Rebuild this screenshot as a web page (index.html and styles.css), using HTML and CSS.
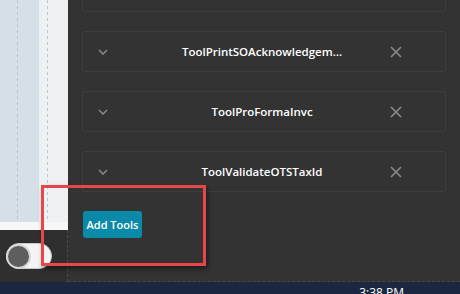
FILE: index.html
```html
<!DOCTYPE html>
<html>
<head>
<meta charset="utf-8">
<link rel="stylesheet" href="styles.css">
</head>
<body>
<div class="screen">
  <div class="main">
    <aside class="side">
      <div class="canvas">
        <div class="col col-a"></div>
        <div class="col col-b"></div>
      </div>
      <div class="strip"></div>
      <div class="side-foot">
        <span class="toggle"><span class="knob"></span></span>
      </div>
    </aside>
    <section class="panel">
      <div class="cards">
        <div class="card card-first"></div>
        <div class="card">
          <svg class="chev" width="10" height="6" viewBox="0 0 10 6"><path d="M1 1 L5 5 L9 1" fill="none" stroke="#8c8c8c" stroke-width="1.5"/></svg>
          <span class="name">ToolPrintSOAcknowledgem…</span>
          <svg class="close" width="12" height="12" viewBox="0 0 12 12"><path d="M1 1 L11 11 M11 1 L1 11" stroke="#8c8c8c" stroke-width="1.6"/></svg>
        </div>
        <div class="card">
          <svg class="chev" width="10" height="6" viewBox="0 0 10 6"><path d="M1 1 L5 5 L9 1" fill="none" stroke="#8c8c8c" stroke-width="1.5"/></svg>
          <span class="name">ToolProFormaInvc</span>
          <svg class="close" width="12" height="12" viewBox="0 0 12 12"><path d="M1 1 L11 11 M11 1 L1 11" stroke="#8c8c8c" stroke-width="1.6"/></svg>
        </div>
        <div class="card">
          <svg class="chev" width="10" height="6" viewBox="0 0 10 6"><path d="M1 1 L5 5 L9 1" fill="none" stroke="#8c8c8c" stroke-width="1.5"/></svg>
          <span class="name">ToolValidateOTSTaxId</span>
          <svg class="close" width="12" height="12" viewBox="0 0 12 12"><path d="M1 1 L11 11 M11 1 L1 11" stroke="#8c8c8c" stroke-width="1.6"/></svg>
        </div>
      </div>
      <button class="add-btn">Add Tools</button>
    </section>
  </div>
  <footer class="taskbar"><span class="clock">3:38 PM</span></footer>
  <div class="highlight"></div>
</div>
</body>
</html>
```

FILE: styles.css
```css
* { box-sizing: border-box; }
html, body { margin: 0; padding: 0; }
body {
  width: 460px;
  height: 294px;
  overflow: hidden;
  background: #333333;
  font-family: "Open Sans", "Noto Sans", sans-serif;
}
.screen {
  position: relative;
  width: 460px;
  height: 294px;
  display: flex;
  flex-direction: column;
}
.main {
  height: 282px;
  display: flex;
}
.side {
  width: 68px;
  display: flex;
  flex-direction: column;
}
.canvas {
  height: 222px;
  display: flex;
}
.col-a {
  width: 39px;
  background: #d4e0e5;
  border-left: 17px solid #d4e0e5;
  background-image: linear-gradient(#b9c3c7 50%, transparent 50%);
  background-size: 1px 6px;
  background-repeat: repeat-y;
  background-position: 0 0;
}
.col-b {
  width: 29px;
  background-color: #edf1f4;
  background-image: linear-gradient(#bfc5c8 50%, transparent 50%);
  background-size: 1px 6px;
  background-repeat: repeat-y;
  background-position: 8px 0;
}
.strip {
  height: 8px;
  background: #f7f7f7;
}
.side-foot {
  flex: 1;
  background: #2f2f2f;
  border-right: 1px dashed #4a4a4a;
  display: flex;
  align-items: flex-start;
  padding: 13px 0 0 6px;
}
.toggle {
  width: 46px;
  height: 26px;
  border-radius: 13px;
  background: #f4f4f4;
  border: 1px solid #c9c9c9;
  display: flex;
  align-items: center;
}
.knob {
  width: 25px;
  height: 25px;
  margin-left: -1px;
  border-radius: 50%;
  background: #5e5e5e;
  border: 2px solid #d6d6d6;
}
.panel {
  flex: 1;
  background: #333333;
  padding: 0 14px;
  border-bottom: 1px dashed #474747;
}
.cards {
  display: flex;
  flex-direction: column;
  gap: 19px;
  margin-top: -29px;
}
.card {
  height: 41px;
  border: 1px solid #3e3e3e;
  border-radius: 2px;
  background: #333333;
  display: grid;
  grid-template-columns: 52px 1fr 56px;
  align-items: center;
}
.chev {
  margin-left: 15px;
  display: block;
}
.name {
  justify-self: center;
  color: #ffffff;
  font-size: 11.5px;
  font-weight: 600;
  white-space: nowrap;
}
.close {
  margin-left: 1px;
  display: block;
}
.add-btn {
  margin: 19px 0 0 1px;
  width: 59px;
  height: 27px;
  padding: 0;
  border: none;
  border-radius: 3px;
  background: #0a8aa8;
  color: #ffffff;
  font-family: "Open Sans", "Noto Sans", sans-serif;
  font-size: 11px;
  font-weight: 600;
}
.taskbar {
  height: 12px;
  background: #1b2741;
  display: flex;
  justify-content: flex-end;
  padding-right: 56px;
  overflow: hidden;
}
.clock {
  color: #ffffff;
  font-family: "Open Sans", sans-serif;
  font-size: 12px;
  line-height: 16px;
  padding-top: 3px;
}
.highlight {
  position: absolute;
  left: 41px;
  top: 185px;
  width: 165px;
  height: 81px;
  border: 3.5px solid #e6474b;
  box-shadow: 2px 3px 5px rgba(0,0,0,0.45);
}
```
